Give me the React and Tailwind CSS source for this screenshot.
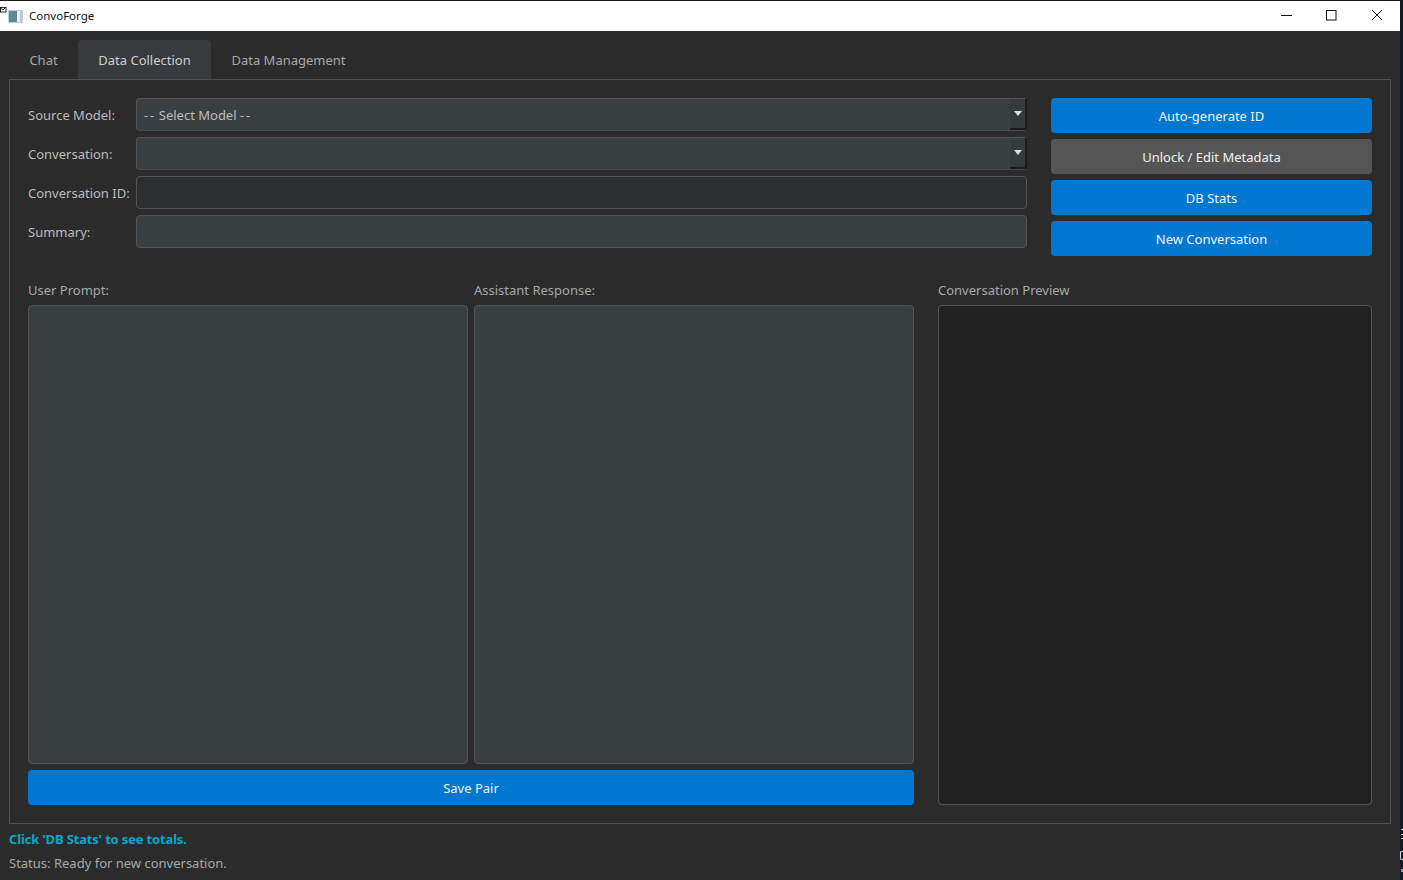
import React from "react";

function Arrow() {
  return (
    <div className="w-[17px] h-full flex items-center justify-center border-r-2 border-b-2 border-r-[#1c1c1c] border-b-[#1c1c1c] rounded-br-[2px] bg-[#353a3d]">
      <div className="w-0 h-0 border-l-[4px] border-r-[4px] border-t-[5px] border-l-transparent border-r-transparent border-t-[#dcdcdc]" />
    </div>
  );
}

function Row({ label, combo, text, dark }) {
  return (
    <div className="flex items-center h-[33px]">
      <div className="w-[108px] shrink-0 text-[#bdbdbd] whitespace-nowrap">{label}</div>
      <div className={`flex-1 h-full flex items-center justify-between rounded-[4px] border border-[#555555] ${dark ? "bg-[#2e2f30]" : "bg-[#3a3f42]"} ${combo ? "border-r-0 border-b-[#4a4a4a]" : ""}`}>
        <span className="pl-[7px] text-[#bdbdbd]">{text}</span>
        {combo && <Arrow />}
      </div>
    </div>
  );
}

function Btn({ children, gray, className = "" }) {
  return (
    <button className={`h-[35px] rounded-[4px] flex items-center justify-center text-[#f2f2f2] ${gray ? "bg-[#555555]" : "bg-[#0078cf]"} ${className}`}>
      {children}
    </button>
  );
}

export default function App() {
  return (
    <div className="w-[1403px] h-[880px] overflow-hidden flex bg-[#2b2b2b] text-[13px] leading-[20px] font-['Noto_Sans','Open_Sans',sans-serif]">
      <div className="w-[1400px] h-full flex flex-col">
        <div className="h-[1px] bg-[#1a1a1a]" />
        <div className="h-[30px] bg-white flex items-center text-[11.5px] text-[#111111]">
          <div className="relative w-[29px] h-full flex items-center shrink-0">
            <svg className="absolute left-0 top-[5px]" width="7" height="7" viewBox="0 0 7 7" fill="none" stroke="#222" strokeWidth="1">
              <rect x="0.5" y="1.5" width="5.5" height="4.5" />
              <path d="M0.5 2l2.5 2 3-3" />
            </svg>
            <div className="ml-[8px] w-[15px] h-[13px] flex border border-[#c4cdd0] bg-[#e6ebec]">
              <div className="w-[8px] h-full bg-[#5b8d96]" />
              <div className="w-[3px] bg-[#eef2f3]" />
              <div className="flex-1 bg-[#b9c6ca]" />
            </div>
          </div>
          <span>ConvoForge</span>
          <div className="ml-auto flex items-center h-full">
            <svg className="w-[46px] h-[30px]" viewBox="0 0 46 30" fill="none" stroke="#111" strokeWidth="1">
              <path d="M19 14.5h11" />
            </svg>
            <svg className="w-[46px] h-[30px]" viewBox="0 0 46 30" fill="none" stroke="#111" strokeWidth="1">
              <rect x="18.5" y="9.5" width="9.5" height="9.5" />
            </svg>
            <svg className="w-[46px] h-[30px]" viewBox="0 0 46 30" fill="none" stroke="#111" strokeWidth="1">
              <path d="M18 9l10 10M28 9l-10 10" />
            </svg>
          </div>
        </div>

        <div className="px-[9px] pt-[9px] flex-1 flex flex-col min-h-0">
          <div className="flex h-[39px]">
            <div className="w-[69px] flex items-center justify-center text-[#a8a8a8]">Chat</div>
            <div className="w-[133px] flex items-center justify-center rounded-t-[4px] bg-[#373b3e] text-[#cfcfcf]">Data Collection</div>
            <div className="w-[155px] flex items-center justify-center text-[#a8a8a8]">Data Management</div>
          </div>

          <div className="h-[745px] border border-[#505050] p-[18px] flex flex-col">
            <div className="flex gap-[24px]">
              <div className="w-[999px] flex flex-col gap-[6px]">
                <Row
                  label="Source Model:"
                  combo
                  text={
                    <>
                      <span className="tracking-[1.5px]">--</span> Select Model <span className="tracking-[1.5px]">--</span>
                    </>
                  }
                />
                <Row label="Conversation:" combo />
                <Row label="Conversation ID:" dark />
                <Row label="Summary:" />
              </div>
              <div className="flex-1 flex flex-col gap-[6px]">
                <Btn>Auto-generate ID</Btn>
                <Btn gray>Unlock / Edit Metadata</Btn>
                <Btn>DB Stats</Btn>
                <Btn>New Conversation</Btn>
              </div>
            </div>

            <div className="flex-1 min-h-0 flex gap-[24px] mt-[24px]">
              <div className="w-[886px] flex flex-col">
                <div className="flex-1 min-h-0 flex gap-[6px]">
                  <div className="flex-1 flex flex-col">
                    <div className="h-[25px] text-[#a8a8a8]">User Prompt:</div>
                    <div className="flex-1 rounded-[4px] border border-[#555555] bg-[#3a3f42]" />
                  </div>
                  <div className="flex-1 flex flex-col">
                    <div className="h-[25px] text-[#a8a8a8]">Assistant Response:</div>
                    <div className="flex-1 rounded-[4px] border border-[#555555] bg-[#3a3f42]" />
                  </div>
                </div>
                <Btn className="mt-[6px] w-full">Save Pair</Btn>
              </div>
              <div className="flex-1 flex flex-col">
                <div className="h-[25px] text-[#a8a8a8]">Conversation Preview</div>
                <div className="flex-1 rounded-[4px] border border-[#555555] bg-[#212121]" />
              </div>
            </div>
          </div>

          <div className="mt-[5px] h-[20px] font-bold text-[#0aa5cf] tracking-[-0.16px]">Click 'DB Stats' to see totals.</div>
          <div className="mt-[4px] h-[20px] text-[#a8a8a8]">Status: Ready for new conversation.</div>
        </div>
      </div>
      <div className="relative w-[3px] h-full bg-[#0b1c28]">
        <div className="absolute left-[1px] top-[829px] w-[2px] h-[1px] bg-[#d8e4ea]" />
        <div className="absolute left-[1px] top-[834px] w-[2px] h-[1px] bg-[#d8e4ea]" />
        <div className="absolute left-[1px] top-[838px] w-[2px] h-[1px] bg-[#d8e4ea]" />
        <div className="absolute left-[0px] top-[851px] w-[3px] h-[9px] rounded-l-[2px] border-l border-t border-b border-[#d8d4e4]" />
        <div className="absolute left-[1px] top-[869px] w-[2px] h-[3px] bg-[#5fb0c8]" />
      </div>
    </div>
  );
}
